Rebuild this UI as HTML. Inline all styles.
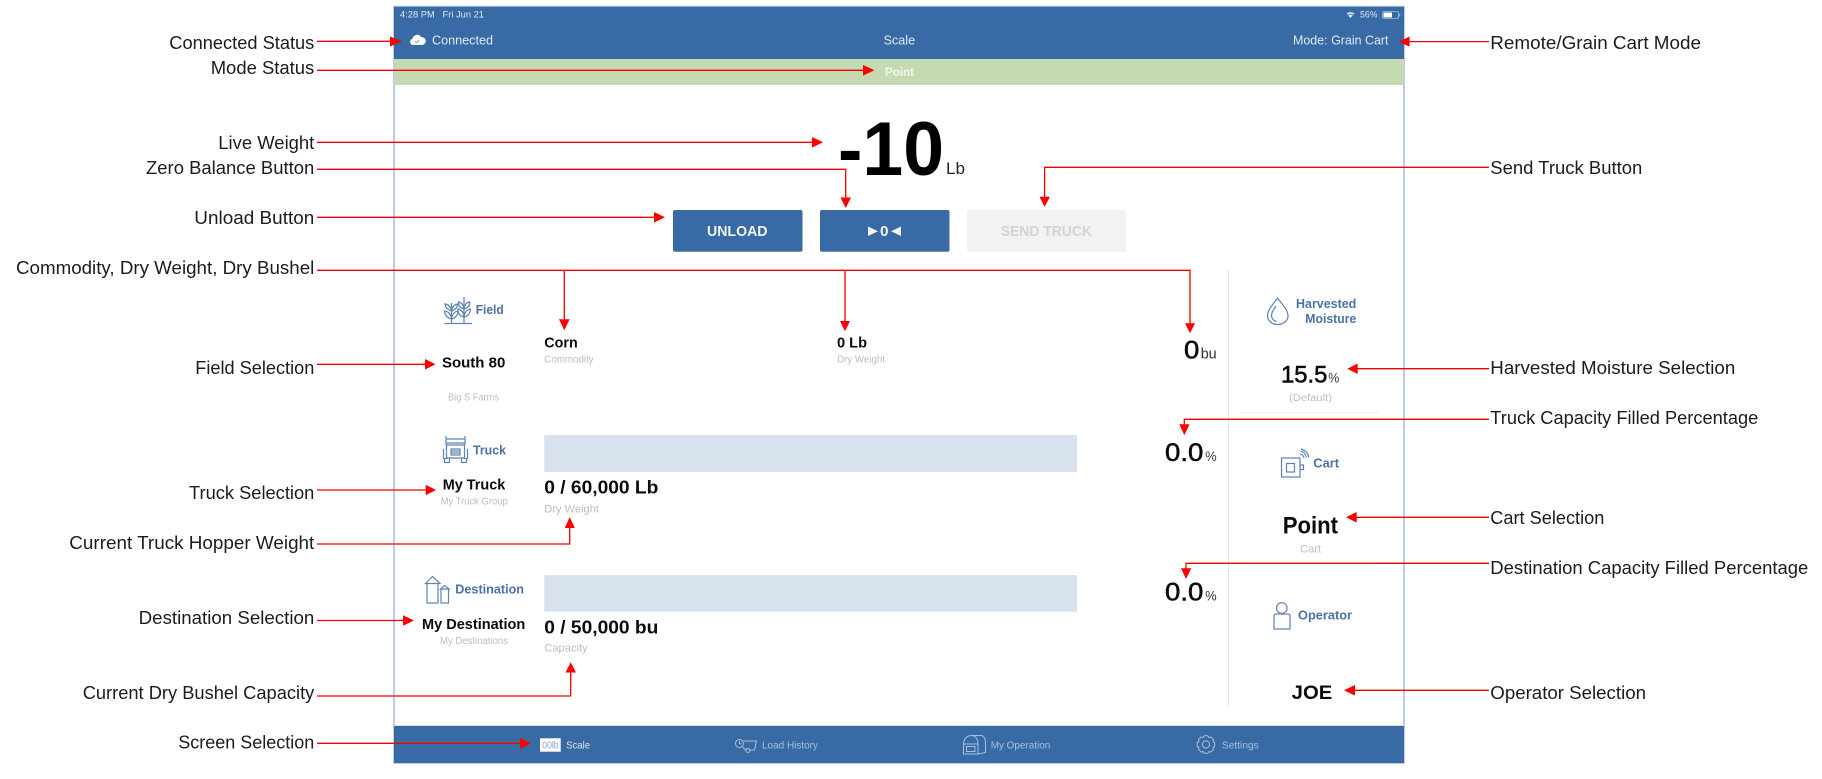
<!DOCTYPE html>
<html lang="en">
<head>
<meta charset="utf-8">
<title>Scale screen annotated</title>
<style>
html,body{margin:0;padding:0;background:#fff;width:1822px;height:779px;overflow:hidden}
svg{display:block}
text{font-family:"Liberation Sans",sans-serif}
.l{font-size:18.5px;fill:#1c1c1c}
.hdr{font-size:13px;fill:#dfe7f1}
.st{font-size:9px;fill:#dfe7f1}
.b{font-weight:700;fill:#0b0b0b}
.m{fill:#0b0b0b;stroke:#0b0b0b;stroke-width:.55}
.sm{font-size:10px;fill:#bdbdbd}
.h{font-weight:700;font-size:13px;fill:#4a72a8}
.tab{font-size:10.5px;fill:#a9bfdb}
.r{stroke:#f40000;stroke-width:1.3;fill:none}
.a{fill:#fb0000}
.i{fill:none;stroke:#5f83b3;stroke-width:1.2}
.t{fill:none;stroke:#a9bfdb;stroke-width:1}
</style>
</head>
<body>
<svg width="1822" height="779" viewBox="0 0 1822 779" xmlns="http://www.w3.org/2000/svg">
<rect width="1822" height="779" fill="#fff"/>

<!-- frame -->
<rect x="394" y="6.5" width="1010" height="756.5" fill="#fff" stroke="#8eaadf" stroke-width="1.2"/>
<rect x="394" y="7" width="1010" height="52" fill="#386ba6"/>
<rect x="394" y="59" width="1010" height="26" fill="#c5dab2"/>
<rect x="394" y="726" width="1010" height="37" fill="#386ba6"/>
<line x1="394" y1="725.6" x2="1404" y2="725.6" stroke="#c9d6e6" stroke-width="0.8"/>

<!-- status bar -->
<text class="st" x="400" y="17.3" textLength="84" lengthAdjust="spacingAndGlyphs" xml:space="preserve">4:28 PM   Fri Jun 21</text>
<path d="M1346.5 13.6a6 6 0 0 1 8 0l-1.1 1.2a4.4 4.4 0 0 0-5.8 0zM1348.2 15.4a3.5 3.5 0 0 1 4.6 0l-2.3 2.6z" fill="#dfe7f1"/>
<text class="st" x="1360" y="17.3" textLength="17.5" lengthAdjust="spacingAndGlyphs">56%</text>
<rect x="1382.5" y="11.5" width="16" height="7" rx="1.6" fill="none" stroke="#a8bcd6" stroke-width=".8"/>
<rect x="1383.5" y="12.5" width="8.5" height="5" rx=".8" fill="#fff"/>
<rect x="1399.2" y="13.8" width="1" height="2.6" fill="#a8bcd6"/>

<!-- header -->
<path d="M413 45a3.2 3.2 0 0 1-.4-6.3 4.6 4.6 0 0 1 8.6-1.5 3.9 3.9 0 0 1 1.2 7.8z" fill="#fff"/>
<path d="M415 41.2l1.6 1.4 2.8-2.8" fill="none" stroke="#7f9fc6" stroke-width=".9"/>
<text class="hdr" x="432" y="44.7" textLength="61" lengthAdjust="spacingAndGlyphs">Connected</text>
<text class="hdr" x="883.6" y="44.7" textLength="31.5" lengthAdjust="spacingAndGlyphs">Scale</text>
<text class="hdr" x="1293" y="44.7" textLength="95.5" lengthAdjust="spacingAndGlyphs">Mode: Grain Cart</text>
<text x="885" y="76" font-size="12" font-weight="700" fill="#f3f7ee" textLength="29" lengthAdjust="spacingAndGlyphs">Point</text>

<!-- live weight -->
<text x="838" y="175" font-size="76" font-weight="700" fill="#000" textLength="106" lengthAdjust="spacingAndGlyphs">-10</text>
<text x="946" y="174" font-size="17" fill="#222" textLength="19" lengthAdjust="spacingAndGlyphs">Lb</text>

<!-- buttons -->
<rect x="673" y="210" width="129.5" height="41.7" rx="2" fill="#386ba6"/>
<rect x="820" y="210" width="129.5" height="41.7" rx="2" fill="#386ba6"/>
<rect x="967" y="210" width="159" height="41.7" rx="2" fill="#f2f2f2"/>
<text x="707" y="236" font-size="15" font-weight="700" fill="#f2f5f9" textLength="60.5" lengthAdjust="spacingAndGlyphs">UNLOAD</text>
<polygon points="868,226.5 878,231.2 868,236" fill="#f2f5f9"/>
<text x="880" y="236" font-size="15" font-weight="700" fill="#f2f5f9" textLength="8.5" lengthAdjust="spacingAndGlyphs">0</text>
<polygon points="901,226.5 891,231.2 901,236" fill="#f2f5f9"/>
<text x="1000.7" y="236" font-size="15" font-weight="700" fill="#d3d3d6" textLength="91.3" lengthAdjust="spacingAndGlyphs">SEND TRUCK</text>

<!-- left column -->
<g class="i">
  <path d="M444.5 323.5H472M451.500 323V303M464 323V297"/>
  <path d="M451.500 319C447 318 445 315 444.500 311C448.500 311.500 451 314.500 451.500 319C452 314.500 454.500 311.500 458 311C457.800 315 456 318 451.500 319"/>
  <path d="M451.500 311C447.500 310 445.500 307.500 445 304C448.500 304.500 451 307 451.500 311C452 307 454.500 304.500 457.500 304C457.300 307.500 455.500 310 451.500 311"/>
  <path d="M464 317C459.500 316 457.800 313 458 309C461.500 309.500 463.500 312.500 464 317C464.500 312.500 467 309.500 470.500 309C470.300 313 468.500 316 464 317"/>
  <path d="M464 309C460 308 458.300 305.500 458.500 302C461.500 302.500 463.500 305 464 309C464.500 305 466.500 302.500 469.800 302C469.800 305.500 468 308 464 309"/>
</g>
<text class="h" x="475.7" y="314" textLength="28" lengthAdjust="spacingAndGlyphs">Field</text>
<text class="b" x="442" y="367.7" font-size="15" textLength="63.3" lengthAdjust="spacingAndGlyphs">South 80</text>
<text class="sm" x="448" y="400.7" textLength="51" lengthAdjust="spacingAndGlyphs">Big S Farms</text>

<g class="i">
  <path d="M446 436v9M465 436v9M446 439h19M446 443h19"/>
  <rect x="446.5" y="445" width="18" height="13" rx="1"/>
  <path d="M443.5 449v9.5h4M467.5 449v9.5h-4M451 449h9v6h-9zM451 451h9M451 453h9"/>
  <path d="M444.5 458.5v4h5v-4M461.5 458.5v4h5v-4"/>
</g>
<text class="h" x="473" y="454.3" textLength="33" lengthAdjust="spacingAndGlyphs">Truck</text>
<text class="b" x="442.7" y="489.3" font-size="15" textLength="62.6" lengthAdjust="spacingAndGlyphs">My Truck</text>
<text class="sm" x="440.7" y="504.3" textLength="67" lengthAdjust="spacingAndGlyphs">My Truck Group</text>

<g class="i">
  <path d="M425.5 583.5l7-7 7.5 7zM427 583.5V603h11v-19.500"/>
  <path d="M440.500 589l4-3.500 4.500 3.500zM441 589v14h7.500v-14"/>
</g>
<text class="h" x="455.3" y="593.7" textLength="68.700" lengthAdjust="spacingAndGlyphs">Destination</text>
<text class="b" x="422" y="629" font-size="15" textLength="103.300" lengthAdjust="spacingAndGlyphs">My Destination</text>
<text class="sm" x="440" y="644" textLength="68" lengthAdjust="spacingAndGlyphs">My Destinations</text>

<!-- centre -->
<text class="b" x="544.3" y="347.3" font-size="15" textLength="33.400" lengthAdjust="spacingAndGlyphs">Corn</text>
<text class="sm" x="544.3" y="362.3" textLength="49.400" lengthAdjust="spacingAndGlyphs">Commodity</text>
<text class="b" x="837" y="347.3" font-size="15" textLength="30" lengthAdjust="spacingAndGlyphs">0 Lb</text>
<text class="sm" x="837" y="362.3" textLength="48" lengthAdjust="spacingAndGlyphs">Dry Weight</text>

<rect x="544.3" y="435" width="532.700" height="37" fill="#d8e2ee"/>
<text class="b" x="544.3" y="493.3" font-size="18" textLength="114" lengthAdjust="spacingAndGlyphs">0 / 60,000 Lb</text>
<text class="sm" x="544.3" y="512.7" style="font-size:11px" textLength="54.700" lengthAdjust="spacingAndGlyphs">Dry Weight</text>

<rect x="544.3" y="575" width="532.700" height="36.700" fill="#d8e2ee"/>
<text class="b" x="544.3" y="633.3" font-size="18" textLength="114" lengthAdjust="spacingAndGlyphs">0 / 50,000 bu</text>
<text class="sm" x="544.3" y="651.7" style="font-size:11px" textLength="43.400" lengthAdjust="spacingAndGlyphs">Capacity</text>

<!-- totals -->
<text class="m" x="1184" y="358.3" font-size="25" textLength="15.300" lengthAdjust="spacingAndGlyphs">0</text>
<text x="1200.700" y="358.3" font-size="15" fill="#333" textLength="16" lengthAdjust="spacingAndGlyphs">bu</text>
<text class="m" x="1165" y="461" font-size="25" textLength="38.300" lengthAdjust="spacingAndGlyphs">0.0</text>
<text x="1205.300" y="461" font-size="14" fill="#333" textLength="11.400" lengthAdjust="spacingAndGlyphs">%</text>
<text class="m" x="1165" y="600.7" font-size="25" textLength="38.300" lengthAdjust="spacingAndGlyphs">0.0</text>
<text x="1205.300" y="600.7" font-size="14" fill="#333" textLength="11.400" lengthAdjust="spacingAndGlyphs">%</text>

<!-- right column -->
<line x1="1228.500" y1="270" x2="1228.500" y2="707" stroke="#e6e6e6" stroke-width="1"/>
<line x1="1240" y1="412.7" x2="1380" y2="412.7" stroke="#f1f1f1" stroke-width="1"/>
<line x1="1240" y1="564" x2="1380" y2="564" stroke="#f1f1f1" stroke-width="1"/>

<g class="i">
  <path d="M1277.500 298c-4 6-10 11.500-10 18a10 8.300 0 0 0 20.500 0c0-6.500-6.500-12-10.500-18z"/>
  <path d="M1276 306c-2 3-4.500 6-4.500 9.500a6 6 0 0 0 5 6"/>
</g>
<text class="h" x="1296" y="308" textLength="60.300" lengthAdjust="spacingAndGlyphs">Harvested</text>
<text class="h" x="1305.300" y="323" textLength="51" lengthAdjust="spacingAndGlyphs">Moisture</text>
<text class="m" x="1281" y="382.3" font-size="24" textLength="46.300" lengthAdjust="spacingAndGlyphs">15.5</text>
<text x="1328.300" y="382.3" font-size="14" fill="#333" textLength="11" lengthAdjust="spacingAndGlyphs">%</text>
<text class="sm" x="1289" y="401" textLength="43" lengthAdjust="spacingAndGlyphs">(Default)</text>

<g class="i">
  <rect x="1281.500" y="458" width="18.500" height="19"/>
  <rect x="1286.500" y="463.500" width="8" height="8.500"/>
  <path d="M1300 465h3.500v4.500H1300"/>
  <path d="M1300 454a5 5 0 0 1 4 4M1300.500 451a8 8 0 0 1 6 6.500M1301 449a11 11 0 0 1 8 8.500"/>
</g>
<text class="h" x="1313.300" y="467.7" textLength="25.700" lengthAdjust="spacingAndGlyphs">Cart</text>
<text class="b" x="1282.700" y="533.7" font-size="24" textLength="55.300" lengthAdjust="spacingAndGlyphs">Point</text>
<text class="sm" x="1300" y="552.7" style="font-size:11px" textLength="21" lengthAdjust="spacingAndGlyphs">Cart</text>

<g class="i">
  <circle cx="1281.800" cy="608" r="5.300"/>
  <path d="M1274 629h16v-13a2 2 0 0 0-2-2h-12a2 2 0 0 0-2 2z"/>
</g>
<text class="h" x="1298" y="619.3" textLength="54" lengthAdjust="spacingAndGlyphs">Operator</text>
<text class="b" x="1291.700" y="699" font-size="19" textLength="40.600" lengthAdjust="spacingAndGlyphs">JOE</text>

<!-- tab bar -->
<rect x="540" y="738.300" width="20.700" height="13.400" fill="#fff"/>
<text x="542.300" y="748.300" font-size="10" fill="#86a2c6" textLength="16.300" lengthAdjust="spacingAndGlyphs">00lb</text>
<text x="566.300" y="748.300" font-size="10.500" fill="#dbe4f0" textLength="23.700" lengthAdjust="spacingAndGlyphs">Scale</text>

<g class="t">
  <circle cx="739.500" cy="743.500" r="4"/>
  <path d="M739.500 741v2.700h2"/>
  <path d="M743.500 741H756.500L754.500 750H750M746 750L742.500 747"/>
  <circle cx="747.800" cy="750.500" r="2"/>
</g>
<text class="tab" x="762" y="748.300" textLength="56" lengthAdjust="spacingAndGlyphs">Load History</text>

<g class="t">
  <path d="M963.500 744c0-5 3.500-8.500 8-8.500H981c3 0 4.500 3.500 4.500 8v9l-7.500 1.500H963.500z"/>
  <path d="M963.500 744H978V754M978 744c0-5-2.500-8-6-8.500"/>
  <rect x="966.500" y="746.500" width="8.500" height="5"/>
</g>
<text class="tab" x="990.700" y="748.300" textLength="59.600" lengthAdjust="spacingAndGlyphs">My Operation</text>

<g class="t" transform="translate(1206 744.500)">
  <circle r="3.600"/>
  <path d="M-2.800-6.800Q-2.500-8.800-1.300-8.800H1.300Q2.500-8.800 2.800-6.800"/>
  <path transform="rotate(45)" d="M-2.800-6.800Q-2.500-8.800-1.300-8.800H1.300Q2.500-8.800 2.800-6.800"/>
  <path transform="rotate(90)" d="M-2.800-6.800Q-2.500-8.800-1.300-8.800H1.300Q2.500-8.800 2.800-6.800"/>
  <path transform="rotate(135)" d="M-2.800-6.800Q-2.500-8.800-1.300-8.800H1.300Q2.500-8.800 2.800-6.800"/>
  <path transform="rotate(180)" d="M-2.800-6.800Q-2.500-8.800-1.300-8.800H1.300Q2.500-8.800 2.800-6.800"/>
  <path transform="rotate(225)" d="M-2.800-6.800Q-2.500-8.800-1.300-8.800H1.300Q2.500-8.800 2.800-6.800"/>
  <path transform="rotate(270)" d="M-2.800-6.800Q-2.500-8.800-1.300-8.800H1.300Q2.500-8.800 2.800-6.800"/>
  <path transform="rotate(315)" d="M-2.800-6.800Q-2.500-8.800-1.300-8.800H1.300Q2.500-8.800 2.800-6.800"/>
</g>
<text class="tab" x="1222" y="748.300" textLength="36.700" lengthAdjust="spacingAndGlyphs">Settings</text>

<!-- left labels -->
<text class="l" x="169.300" y="49" textLength="145" lengthAdjust="spacingAndGlyphs">Connected Status</text>
<text class="l" x="210.700" y="74" textLength="103.600" lengthAdjust="spacingAndGlyphs">Mode Status</text>
<text class="l" x="218.300" y="149" textLength="96" lengthAdjust="spacingAndGlyphs">Live Weight</text>
<text class="l" x="146" y="174" textLength="168.300" lengthAdjust="spacingAndGlyphs">Zero Balance Button</text>
<text class="l" x="194.300" y="224" textLength="120" lengthAdjust="spacingAndGlyphs">Unload Button</text>
<text class="l" x="16" y="274" textLength="298.300" lengthAdjust="spacingAndGlyphs">Commodity, Dry Weight, Dry Bushel</text>
<text class="l" x="195.300" y="374" textLength="119" lengthAdjust="spacingAndGlyphs">Field Selection</text>
<text class="l" x="189" y="499" textLength="125.300" lengthAdjust="spacingAndGlyphs">Truck Selection</text>
<text class="l" x="69.300" y="549" textLength="245" lengthAdjust="spacingAndGlyphs">Current Truck Hopper Weight</text>
<text class="l" x="138.700" y="624" textLength="175.600" lengthAdjust="spacingAndGlyphs">Destination Selection</text>
<text class="l" x="82.700" y="699" textLength="231.600" lengthAdjust="spacingAndGlyphs">Current Dry Bushel Capacity</text>
<text class="l" x="178.300" y="748.300" textLength="136" lengthAdjust="spacingAndGlyphs">Screen Selection</text>

<!-- right labels -->
<text class="l" x="1490.300" y="49" textLength="210.700" lengthAdjust="spacingAndGlyphs">Remote/Grain Cart Mode</text>
<text class="l" x="1490.300" y="174" textLength="152" lengthAdjust="spacingAndGlyphs">Send Truck Button</text>
<text class="l" x="1490.300" y="374" textLength="245" lengthAdjust="spacingAndGlyphs">Harvested Moisture Selection</text>
<text class="l" x="1490.300" y="424" textLength="268" lengthAdjust="spacingAndGlyphs">Truck Capacity Filled Percentage</text>
<text class="l" x="1490.300" y="524" textLength="114" lengthAdjust="spacingAndGlyphs">Cart Selection</text>
<text class="l" x="1490.300" y="574" textLength="318" lengthAdjust="spacingAndGlyphs">Destination Capacity Filled Percentage</text>
<text class="l" x="1490.300" y="699" textLength="155.700" lengthAdjust="spacingAndGlyphs">Operator Selection</text>

<!-- arrows left -->
<path class="r" d="M317 41.300H391"/><polygon class="a" points="402,41.300 390,36.500 390,46.500"/>
<path class="r" d="M317 70.300H864"/><polygon class="a" points="874.500,70.300 863,65 863,75.600"/>
<path class="r" d="M317 142.300H813"/><polygon class="a" points="823,142.300 812,137 812,147.600"/>
<path class="r" d="M317 169.300H845.700V198"/><polygon class="a" points="845.700,208 840.500,197.500 851,197.500"/>
<path class="r" d="M317 217.300H655"/><polygon class="a" points="665,217.300 654,212 654,222.600"/>
<path class="r" d="M317 270.300H1190V324M564.300 270.300V320M845 270.300V321"/>
<polygon class="a" points="564.300,330.300 559,319.300 569.600,319.300"/>
<polygon class="a" points="845,331.300 840,321 850,321"/>
<polygon class="a" points="1190,333.300 1185,323.300 1195,323.300"/>
<path class="r" d="M317 364.300H426"/><polygon class="a" points="435.500,364.300 425,359 425,369.600"/>
<path class="r" d="M317 490H426.500"/><polygon class="a" points="436,490 425.700,484.800 425.700,495.200"/>
<path class="r" d="M317 544H569.700V527"/><polygon class="a" points="569.700,517 564.800,528 574.800,528"/>
<path class="r" d="M317 620.500H404"/><polygon class="a" points="414,620.500 403,615.300 403,625.700"/>
<path class="r" d="M317 696H570.700V672"/><polygon class="a" points="570.700,662.300 565.500,672.500 576,672.500"/>
<path class="r" d="M317 743.300H521"/><polygon class="a" points="531,743.300 520,737.800 520,748.800"/>

<!-- arrows right -->
<path class="r" d="M1489 41.600H1409"/><polygon class="a" points="1399,41.600 1409.600,36.500 1409.600,46.800"/>
<path class="r" d="M1489 167.300H1044.600V197"/><polygon class="a" points="1044.600,206.700 1039.500,196.700 1050,196.700"/>
<path class="r" d="M1489 368.700H1357"/><polygon class="a" points="1347.300,368.700 1357.700,363.500 1357.700,374"/>
<path class="r" d="M1489 419.300H1184.300V425"/><polygon class="a" points="1184.300,435.300 1179.300,424.300 1189.500,424.300"/>
<path class="r" d="M1489 517.300H1356"/><polygon class="a" points="1346,517.300 1356.700,512 1356.700,522.600"/>
<path class="r" d="M1489 563.300H1186V569"/><polygon class="a" points="1186,579 1181,568.300 1191.300,568.300"/>
<path class="r" d="M1489 690.300H1354"/><polygon class="a" points="1344,690.300 1355,685 1355,695.600"/>
</svg>
</body>
</html>
